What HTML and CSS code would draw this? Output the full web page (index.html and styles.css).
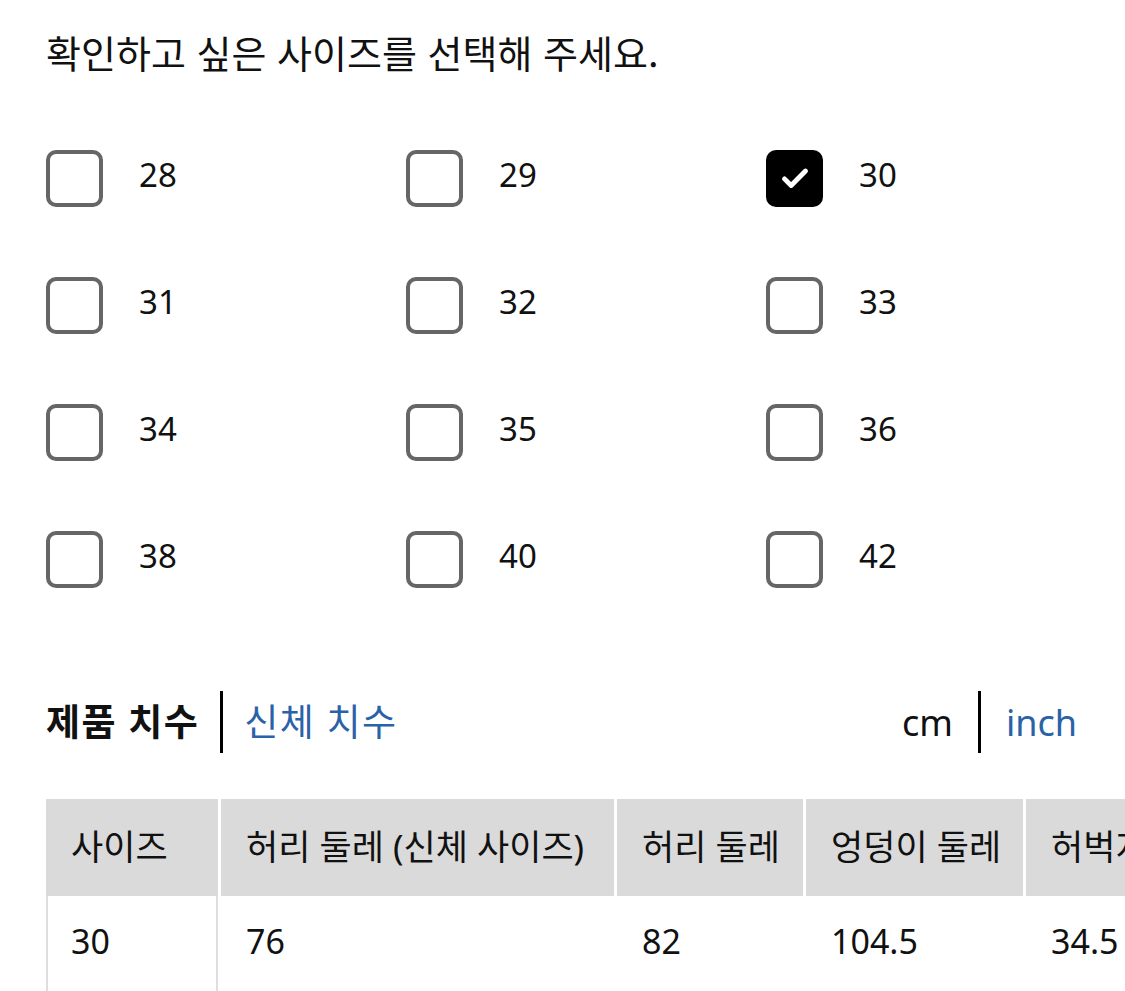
FILE: index.html
```html
<!DOCTYPE html>
<html lang="ko">
<head>
    <meta charset="UTF-8">
    <meta name="viewport" content="width=device-width, initial-scale=1.0">
    <title>사이즈 선택</title>
    <link rel="stylesheet" href="styles.css">
</head>
<body>

<div class="page">
    <p class="title">확인하고 싶은 사이즈를 선택해 주세요.</p>

    <!-- Size checkboxes -->
    <div class="size-grid">
        <label class="size-item"><span class="box"></span><span class="size-label">28</span></label>
        <label class="size-item"><span class="box"></span><span class="size-label">29</span></label>
        <label class="size-item"><span class="box checked">
            <svg viewBox="0 0 24 24" width="42" height="42"><path d="M6 12.5l3.8 3.8L18 8" fill="none" stroke="#fff" stroke-width="2.8" stroke-linecap="round" stroke-linejoin="round"/></svg>
        </span><span class="size-label">30</span></label>
        <label class="size-item"><span class="box"></span><span class="size-label">31</span></label>
        <label class="size-item"><span class="box"></span><span class="size-label">32</span></label>
        <label class="size-item"><span class="box"></span><span class="size-label">33</span></label>
        <label class="size-item"><span class="box"></span><span class="size-label">34</span></label>
        <label class="size-item"><span class="box"></span><span class="size-label">35</span></label>
        <label class="size-item"><span class="box"></span><span class="size-label">36</span></label>
        <label class="size-item"><span class="box"></span><span class="size-label">38</span></label>
        <label class="size-item"><span class="box"></span><span class="size-label">40</span></label>
        <label class="size-item"><span class="box"></span><span class="size-label">42</span></label>
    </div>

    <!-- Tabs and units -->
    <div class="toggle-row">
        <div class="toggle">
            <span class="active bold ko">제품 치수</span>
            <span class="divider"></span>
            <a class="link ko">신체 치수</a>
        </div>
        <div class="toggle units">
            <span class="active">cm</span>
            <span class="divider"></span>
            <a class="link">inch</a>
        </div>
    </div>

    <div class="table-wrap">
        <table class="size-table">
            <colgroup>
                <col style="width: 175px">
                <col style="width: 396px">
                <col style="width: 189px">
                <col style="width: 220px">
                <col style="width: 240px">
            </colgroup>
            <thead>
                <tr>
                    <th>사이즈</th>
                    <th>허리 둘레 (신체 사이즈)</th>
                    <th>허리 둘레</th>
                    <th>엉덩이 둘레</th>
                    <th>허벅지 둘레</th>
                </tr>
            </thead>
            <tbody>
                <tr>
                    <td>30</td>
                    <td>76</td>
                    <td>82</td>
                    <td>104.5</td>
                    <td>34.5</td>
                </tr>
            </tbody>
        </table>
    </div>
</div>

</body>
</html>
```

FILE: styles.css
```css
* {
    box-sizing: border-box;
}

body {
    margin: 0;
    padding: 0;
    background-color: #fff;
    color: #111;
    font-family: "Noto Sans", "Noto Sans CJK KR", sans-serif;
    overflow: hidden;
}

.page {
    padding: 25px 0 0 46px;
}

.title {
    margin: 0;
    font-family: "Noto Sans CJK KR", sans-serif;
    font-size: 38px;
    line-height: 54px;
}

.size-grid {
    display: grid;
    grid-template-columns: repeat(3, 360px);
    row-gap: 71px;
    margin-top: 71px;
}

.size-item {
    display: flex;
    align-items: center;
    gap: 36px;
    height: 56px;
}

.box {
    flex-shrink: 0;
    width: 57px;
    height: 57px;
    border: 4px solid #666;
    border-radius: 10px;
    display: flex;
    justify-content: center;
    align-items: center;
}

.box.checked {
    background-color: #000;
    border-color: #000;
}

.size-label {
    font-size: 33px;
    margin-bottom: 8px;
}

.toggle-row {
    display: flex;
    justify-content: space-between;
    align-items: center;
    margin-top: 104px;
    padding-right: 48px;
}

.toggle {
    display: flex;
    align-items: center;
    gap: 21px;
    font-size: 37px;
}

.toggle.units {
    gap: 25px;
    font-size: 36px;
}

.toggle .ko {
    letter-spacing: 1.5px;
    margin-bottom: 4px;
}

.toggle .bold {
    font-weight: bold;
}

.divider {
    width: 3px;
    height: 62px;
    background-color: #000;
}

.link {
    color: #2a62a8;
    cursor: pointer;
}

.table-wrap {
    margin-top: 46px;
    overflow: hidden;
}

.size-table {
    table-layout: fixed;
    width: 1220px;
    border-collapse: separate;
    border-spacing: 0;
    font-size: 35px;
}

.size-table th,
.size-table td {
    text-align: left;
    font-weight: normal;
    padding: 0 0 6px 25px;
    white-space: nowrap;
    border-right: 3px solid #fff;
}

.size-table th {
    background-color: #dadada;
    height: 97px;
}

.size-table td {
    height: 96px;
    font-size: 34px;
}

.size-table td:first-child {
    box-shadow: inset 2px 0 #dedede, inset -2px 0 #dedede;
}
```
